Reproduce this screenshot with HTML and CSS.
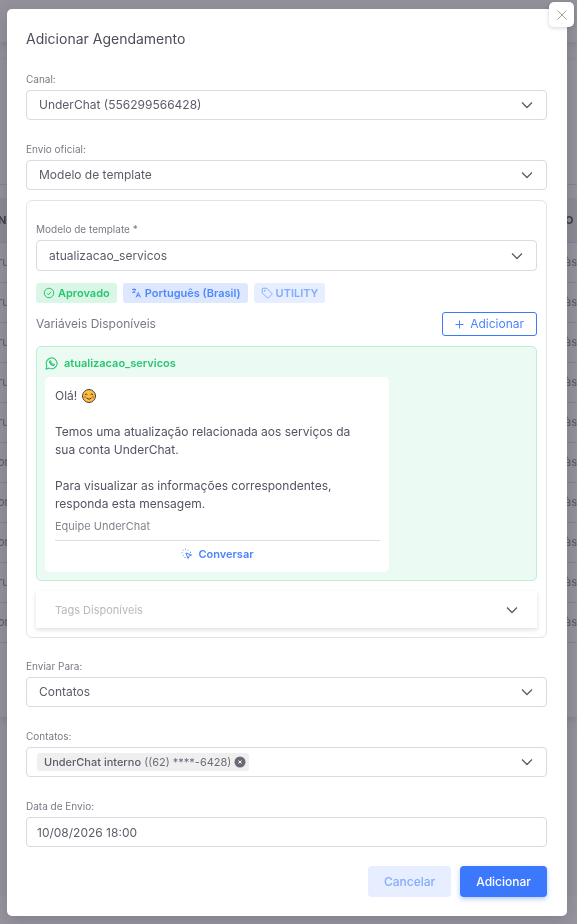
FILE: index.html
```
<!DOCTYPE html>
<html lang="pt-BR">
<head>
    <meta charset="UTF-8">
    <meta name="viewport" content="width=device-width, initial-scale=1.0">
    <title>Adicionar Agendamento</title>
    <link rel="stylesheet" href="styles.css">
</head>
<body>

    <!-- Page behind the dialog -->
    <div class="page" aria-hidden="true">
        <div class="page-top"></div>
        <div class="page-card">
            <div class="page-filters"></div>
            <table class="page-table">
                <thead>
                    <tr><th>NV</th><th>O</th></tr>
                </thead>
                <tbody>
                    <tr><td>ru</td><td>às</td></tr>
                    <tr><td>ru</td><td>às</td></tr>
                    <tr><td>ru</td><td>às</td></tr>
                    <tr><td>ru</td><td>às</td></tr>
                    <tr><td>ru</td><td>às</td></tr>
                    <tr><td>or</td><td>às</td></tr>
                    <tr><td>or</td><td>às</td></tr>
                    <tr><td>or</td><td>às</td></tr>
                    <tr><td>ru</td><td>às</td></tr>
                    <tr><td>or</td><td>às</td></tr>
                </tbody>
            </table>
        </div>
        <div class="page-footer"></div>
    </div>

    <!-- Dialog -->
    <div class="overlay">
        <div class="dialog" role="dialog" aria-labelledby="dialog-title">
            <button type="button" class="close-btn" aria-label="Fechar">
                <svg width="12" height="12" viewBox="0 0 12 12"><path d="M1.5 1.5l9 9M10.5 1.5l-9 9"/></svg>
            </button>

            <h1 id="dialog-title">Adicionar Agendamento</h1>

            <form class="form">
                <div class="field">
                    <label for="canal">Canal:</label>
                    <div class="select">
                        <select id="canal"><option>UnderChat (556299566428)</option></select>
                        <svg class="chevron" viewBox="0 0 12 8"><path d="M1 1.5l5 5 5-5"/></svg>
                    </div>
                </div>

                <div class="field">
                    <label for="envio">Envio oficial:</label>
                    <div class="select">
                        <select id="envio"><option>Modelo de template</option></select>
                        <svg class="chevron" viewBox="0 0 12 8"><path d="M1 1.5l5 5 5-5"/></svg>
                    </div>
                </div>

                <!-- Template -->
                <section class="template">
                    <div class="field">
                        <label for="modelo">Modelo de template *</label>
                        <div class="select">
                            <select id="modelo"><option>atualizacao_servicos</option></select>
                            <svg class="chevron" viewBox="0 0 12 8"><path d="M1 1.5l5 5 5-5"/></svg>
                        </div>
                    </div>

                    <div class="chips">
                        <span class="chip chip-green">
                            <svg class="icon" viewBox="0 0 24 24"><circle cx="12" cy="12" r="9.5"/><path d="M8 12.5l3 3 5-6"/></svg>
                            Aprovado
                        </span>
                        <span class="chip chip-blue">
                            <svg class="icon" viewBox="0 0 24 24"><path d="M4 5h8M8 2.5V5M11 5c-1 4-3 5.500-6.500 6.500M6 8c1 2 2.500 3 4.500 3.500M12 21l4.500-10L21 21M13.500 17.500h6"/></svg>
                            Português (Brasil)
                        </span>
                        <span class="chip chip-light">
                            <svg class="icon" viewBox="0 0 24 24"><path d="M2.5 4.5V12l10 9.500c.8.7 1.800.7 2.500 0l6.500-6.500c.7-.8.7-1.800 0-2.500l-10-10h-7a2 2 0 0 0-2 2z"/><circle cx="7.5" cy="7.5" r="1"/></svg>
                            UTILITY
                        </span>
                    </div>

                    <div class="variables">
                        <span>Variáveis Disponíveis</span>
                        <button type="button" class="btn-outline">
                            <svg width="9" height="9" viewBox="0 0 9 9"><path d="M4.5 .5v8M.5 4.5h8"/></svg>
                            Adicionar
                        </button>
                    </div>

                    <div class="preview">
                        <div class="preview-name">
                            <svg class="icon icon-whatsapp" viewBox="0 0 24 24"><path d="M2 22l1.500-5.500A10 10 0 1 1 7.500 20.500z"/><path d="M8.500 7.500c-1.500 3 4 9.500 8 8l.5-2-2.500-1-1.500 1c-1.500-.5-2-1.500-2.500-2.500l1-1.500-1-2z"/></svg>
                            atualizacao_servicos
                        </div>
                        <div class="message">
                            <p>Olá!
                                <svg class="emoji" viewBox="0 0 16 16" role="img" aria-label="sorriso">
                                    <circle class="emoji-face" cx="8" cy="8" r="6.500"/>
                                    <circle class="emoji-cheek" cx="4" cy="9" r="1.300"/>
                                    <circle class="emoji-cheek" cx="12" cy="9" r="1.300"/>
                                    <path class="emoji-line" d="M4 6.800q1.200-1.800 2.400 0M9.600 6.800q1.200-1.800 2.400 0M5.500 10q2.500 2.500 5 0"/>
                                </svg>
                            </p>
                            <p>Temos uma atualização relacionada aos serviços da<br>sua conta UnderChat.</p>
                            <p>Para visualizar as informações correspondentes,<br>responda esta mensagem.</p>
                            <small>Equipe UnderChat</small>
                            <button type="button" class="reply-btn">
                                <svg class="icon" viewBox="0 0 24 24"><path d="M10 10l11 4-5 2-2 5zM9 1.500v2M3.500 3.500L5 5M1 9.500h2M3.500 16L5 14.500M15 3.500L13.500 5M8 18v2M18 8.500h2"/></svg>
                                Conversar
                            </button>
                        </div>
                    </div>

                    <button type="button" class="tags">
                        Tags Disponíveis
                        <svg class="chevron" viewBox="0 0 12 8"><path d="M1 1.5l5 5 5-5"/></svg>
                    </button>
                </section>

                <div class="field">
                    <label for="para">Enviar Para:</label>
                    <div class="select">
                        <select id="para"><option>Contatos</option></select>
                        <svg class="chevron" viewBox="0 0 12 8"><path d="M1 1.5l5 5 5-5"/></svg>
                    </div>
                </div>

                <div class="field">
                    <label for="contatos">Contatos:</label>
                    <div class="tag-box">
                        <span class="contact">
                            <span><b>UnderChat interno</b> ((62) ****-6428)</span>
                            <button type="button" aria-label="Remover">
                                <svg width="12" height="12" viewBox="0 0 12 12"><circle cx="6" cy="6" r="5.5"/><path d="M4.5 4.5l3 3M7.5 4.5l-3 3"/></svg>
                            </button>
                        </span>
                        <input type="text" id="contatos">
                        <svg class="chevron" viewBox="0 0 12 8"><path d="M1 1.5l5 5 5-5"/></svg>
                    </div>
                </div>

                <div class="field">
                    <label for="data">Data de Envio:</label>
                    <input type="text" id="data" class="text-input" value="10/08/2026 18:00">
                </div>

                <div class="actions">
                    <button type="button" class="btn btn-cancel">Cancelar</button>
                    <button type="submit" class="btn btn-primary">Adicionar</button>
                </div>
            </form>
        </div>
    </div>

</body>
</html>
```
FILE: styles.css
```
/* Global Styles */
* {
    box-sizing: border-box;
}

body {
    margin: 0;
    min-height: 100vh;
    background: #94919b;
    color: #5e5b69;
    font-family: Inter, 'Open Sans', sans-serif;
    font-size: 12px;
    line-height: 18px;
}

button,
input,
select {
    font: inherit;
    color: inherit;
}

button {
    cursor: pointer;
}

svg {
    flex: none;
    fill: none;
    stroke: currentColor;
}

/* Page behind the dialog */
.page {
    position: fixed;
    inset: 0;
    display: flex;
    flex-direction: column;
    overflow: hidden;
    color: #5a5664;
}

.page-top {
    height: 42px;
    margin-bottom: 18px;
    box-shadow: 0 2px 8px #817e88;
}

.page-card {
    height: 657px;
    box-shadow: 0 2px 8px #817e88;
}

.page-filters {
    height: 125px;
    border-bottom: 1px solid #85828c;
    margin-bottom: 13px;
}

.page-table {
    width: 100%;
    border-collapse: collapse;
    font-size: 11px;
}

.page-table th,
.page-table td {
    height: 40px;
    padding: 0;
    text-align: left;
    border-bottom: 1px solid #85828c;
}

.page-table th {
    height: 44px;
    color: #413e4b;
    background: #8d8a94;
    border-bottom-color: #7b80a8;
}

.page-table th:first-child,
.page-table td:first-child {
    text-indent: -2px;
}

.page-table th:last-child,
.page-table td:last-child {
    width: 10px;
}

.page-footer {
    margin-top: auto;
    height: 28px;
    background: #97949e;
}

/* Dialog */
.overlay {
    position: relative;
    padding: 9px 10px 8px 7px;
}

.dialog {
    position: relative;
    padding: 20px 20px 19px 19px;
    background: #fff;
    border-radius: 5px;
    box-shadow: 0 4px 16px rgba(47, 43, 61, 0.2);
}

.close-btn {
    position: absolute;
    top: -7px;
    right: -7px;
    width: 25px;
    height: 25px;
    padding: 0;
    display: grid;
    place-items: center;
    color: #a5a3ac;
    background: #fff;
    border: none;
    border-radius: 5px;
    box-shadow: 0 1px 4px rgba(47, 43, 61, 0.2);
}

h1 {
    margin: 0 0 24px;
    font-size: 14px;
    font-weight: 400;
    line-height: 20px;
    color: #4f4c5b;
}

/* Fields */
.field label {
    display: block;
    height: 17px;
    font-size: 10px;
    line-height: 13px;
    color: #7b7985;
}

.field + .field {
    margin-top: 23px;
}

.select {
    display: grid;
    align-items: center;
}

.select > * {
    grid-area: 1 / 1;
}

.select select,
.text-input,
.tag-box {
    width: 100%;
    height: 30px;
    padding: 0 12px;
    appearance: none;
    background: #fff;
    border: 1px solid #dbdade;
    border-radius: 4px;
}

.text-input {
    display: block;
    padding: 0 10px;
}

.chevron {
    width: 12px;
    height: 8px;
    stroke-width: 1.3;
    color: #5e5b69;
    pointer-events: none;
}

.select .chevron {
    justify-self: end;
    margin-right: 14px;
}

/* Template */
.template {
    margin: 10px 0 22px;
    padding: 22px 9px 9px;
    border: 1px solid #e3e2e5;
    border-radius: 6px;
}

.template .select select {
    height: 31px;
}

.chips {
    display: flex;
    gap: 6px;
    margin: 12px 0 9px;
}

.chip {
    display: flex;
    align-items: center;
    gap: 3px;
    height: 20px;
    padding: 0 7px;
    font-size: 11px;
    font-weight: 600;
    border-radius: 3px;
}

.icon {
    width: 12px;
    height: 12px;
    stroke-width: 2;
}

.icon-whatsapp {
    width: 13px;
    height: 13px;
}

.chip-green {
    color: #28c76f;
    background: #daf6e6;
}

.chip-blue {
    color: #5088fc;
    background: #dde8ff;
}

.chip-light {
    color: #83abff;
    background: #e6eeff;
}

.variables {
    display: flex;
    justify-content: space-between;
    align-items: center;
    margin-bottom: 10px;
    color: #7b7985;
}

.btn-outline {
    display: flex;
    align-items: center;
    gap: 6px;
    height: 24px;
    padding: 0 12px;
    color: #4c84ff;
    background: #fff;
    border: 1px solid #3b78fb;
    border-radius: 3px;
}

/* Message preview */
.preview {
    padding: 7px 8px 8px;
    background: #ebfaf2;
    border: 1px solid #bcf0d2;
    border-radius: 5px;
}

.preview-name {
    display: flex;
    align-items: center;
    gap: 6px;
    margin-bottom: 5px;
    font-size: 11px;
    font-weight: 600;
    color: #28c76f;
}

.message {
    width: 344px;
    max-width: 100%;
    padding: 10px 9px 6px 10px;
    background: #fff;
    border-radius: 5px;
}

.message p {
    margin: 0 0 18px;
    color: #555261;
}

.message p:last-of-type {
    margin-bottom: 5px;
}

.message small {
    display: block;
    font-size: 11px;
    line-height: 16px;
    color: #85838e;
}

.emoji {
    width: 16px;
    height: 16px;
    vertical-align: -4px;
}

.emoji-face {
    fill: #fcc03d;
    stroke: #44404a;
}

.emoji-cheek {
    fill: #f77b4a;
    stroke: none;
}

.emoji-line {
    stroke: #4a3828;
}

.reply-btn {
    display: flex;
    justify-content: center;
    align-items: center;
    gap: 5px;
    width: 100%;
    height: 26px;
    margin-top: 6px;
    padding: 0;
    font-size: 11px;
    font-weight: 600;
    color: #4c84ff;
    background: none;
    border: none;
    border-top: 1px solid #dfdee2;
}

.tags {
    display: flex;
    justify-content: space-between;
    align-items: center;
    width: 100%;
    height: 37px;
    margin-top: 10px;
    padding: 0 19px;
    font-size: 11px;
    color: #b9b8be;
    background: #fff;
    border: none;
    box-shadow: 0 2px 4px rgba(47, 43, 61, 0.15);
}

/* Contacts */
.tag-box {
    display: flex;
    align-items: center;
    padding: 0 13px 0 10px;
}

.tag-box input {
    flex: 1;
    min-width: 0;
    border: none;
    outline: none;
}

.contact {
    display: flex;
    align-items: center;
    gap: 3px;
    height: 18px;
    padding: 0 3px 0 7px;
    font-size: 11px;
    color: #6f6c79;
    background: #f0eff0;
    border-radius: 3px;
}

.contact b {
    font-weight: 500;
    color: #5e5b69;
}

.contact button {
    display: flex;
    padding: 0;
    background: none;
    border: none;
}

.contact circle {
    fill: #6c6975;
    stroke: none;
}

.contact path {
    stroke: #fff;
}

/* Actions */
.actions {
    display: flex;
    justify-content: flex-end;
    gap: 9px;
    margin-top: 19px;
}

.btn {
    height: 31px;
    padding: 0 16px;
    font-weight: 500;
    border: none;
    border-radius: 4px;
}

.btn-cancel {
    color: #83abff;
    background: #e6eeff;
}

.btn-primary {
    color: #fff;
    background: #3b78fb;
    box-shadow: 0 2px 5px rgba(59, 120, 251, 0.4);
}
```
